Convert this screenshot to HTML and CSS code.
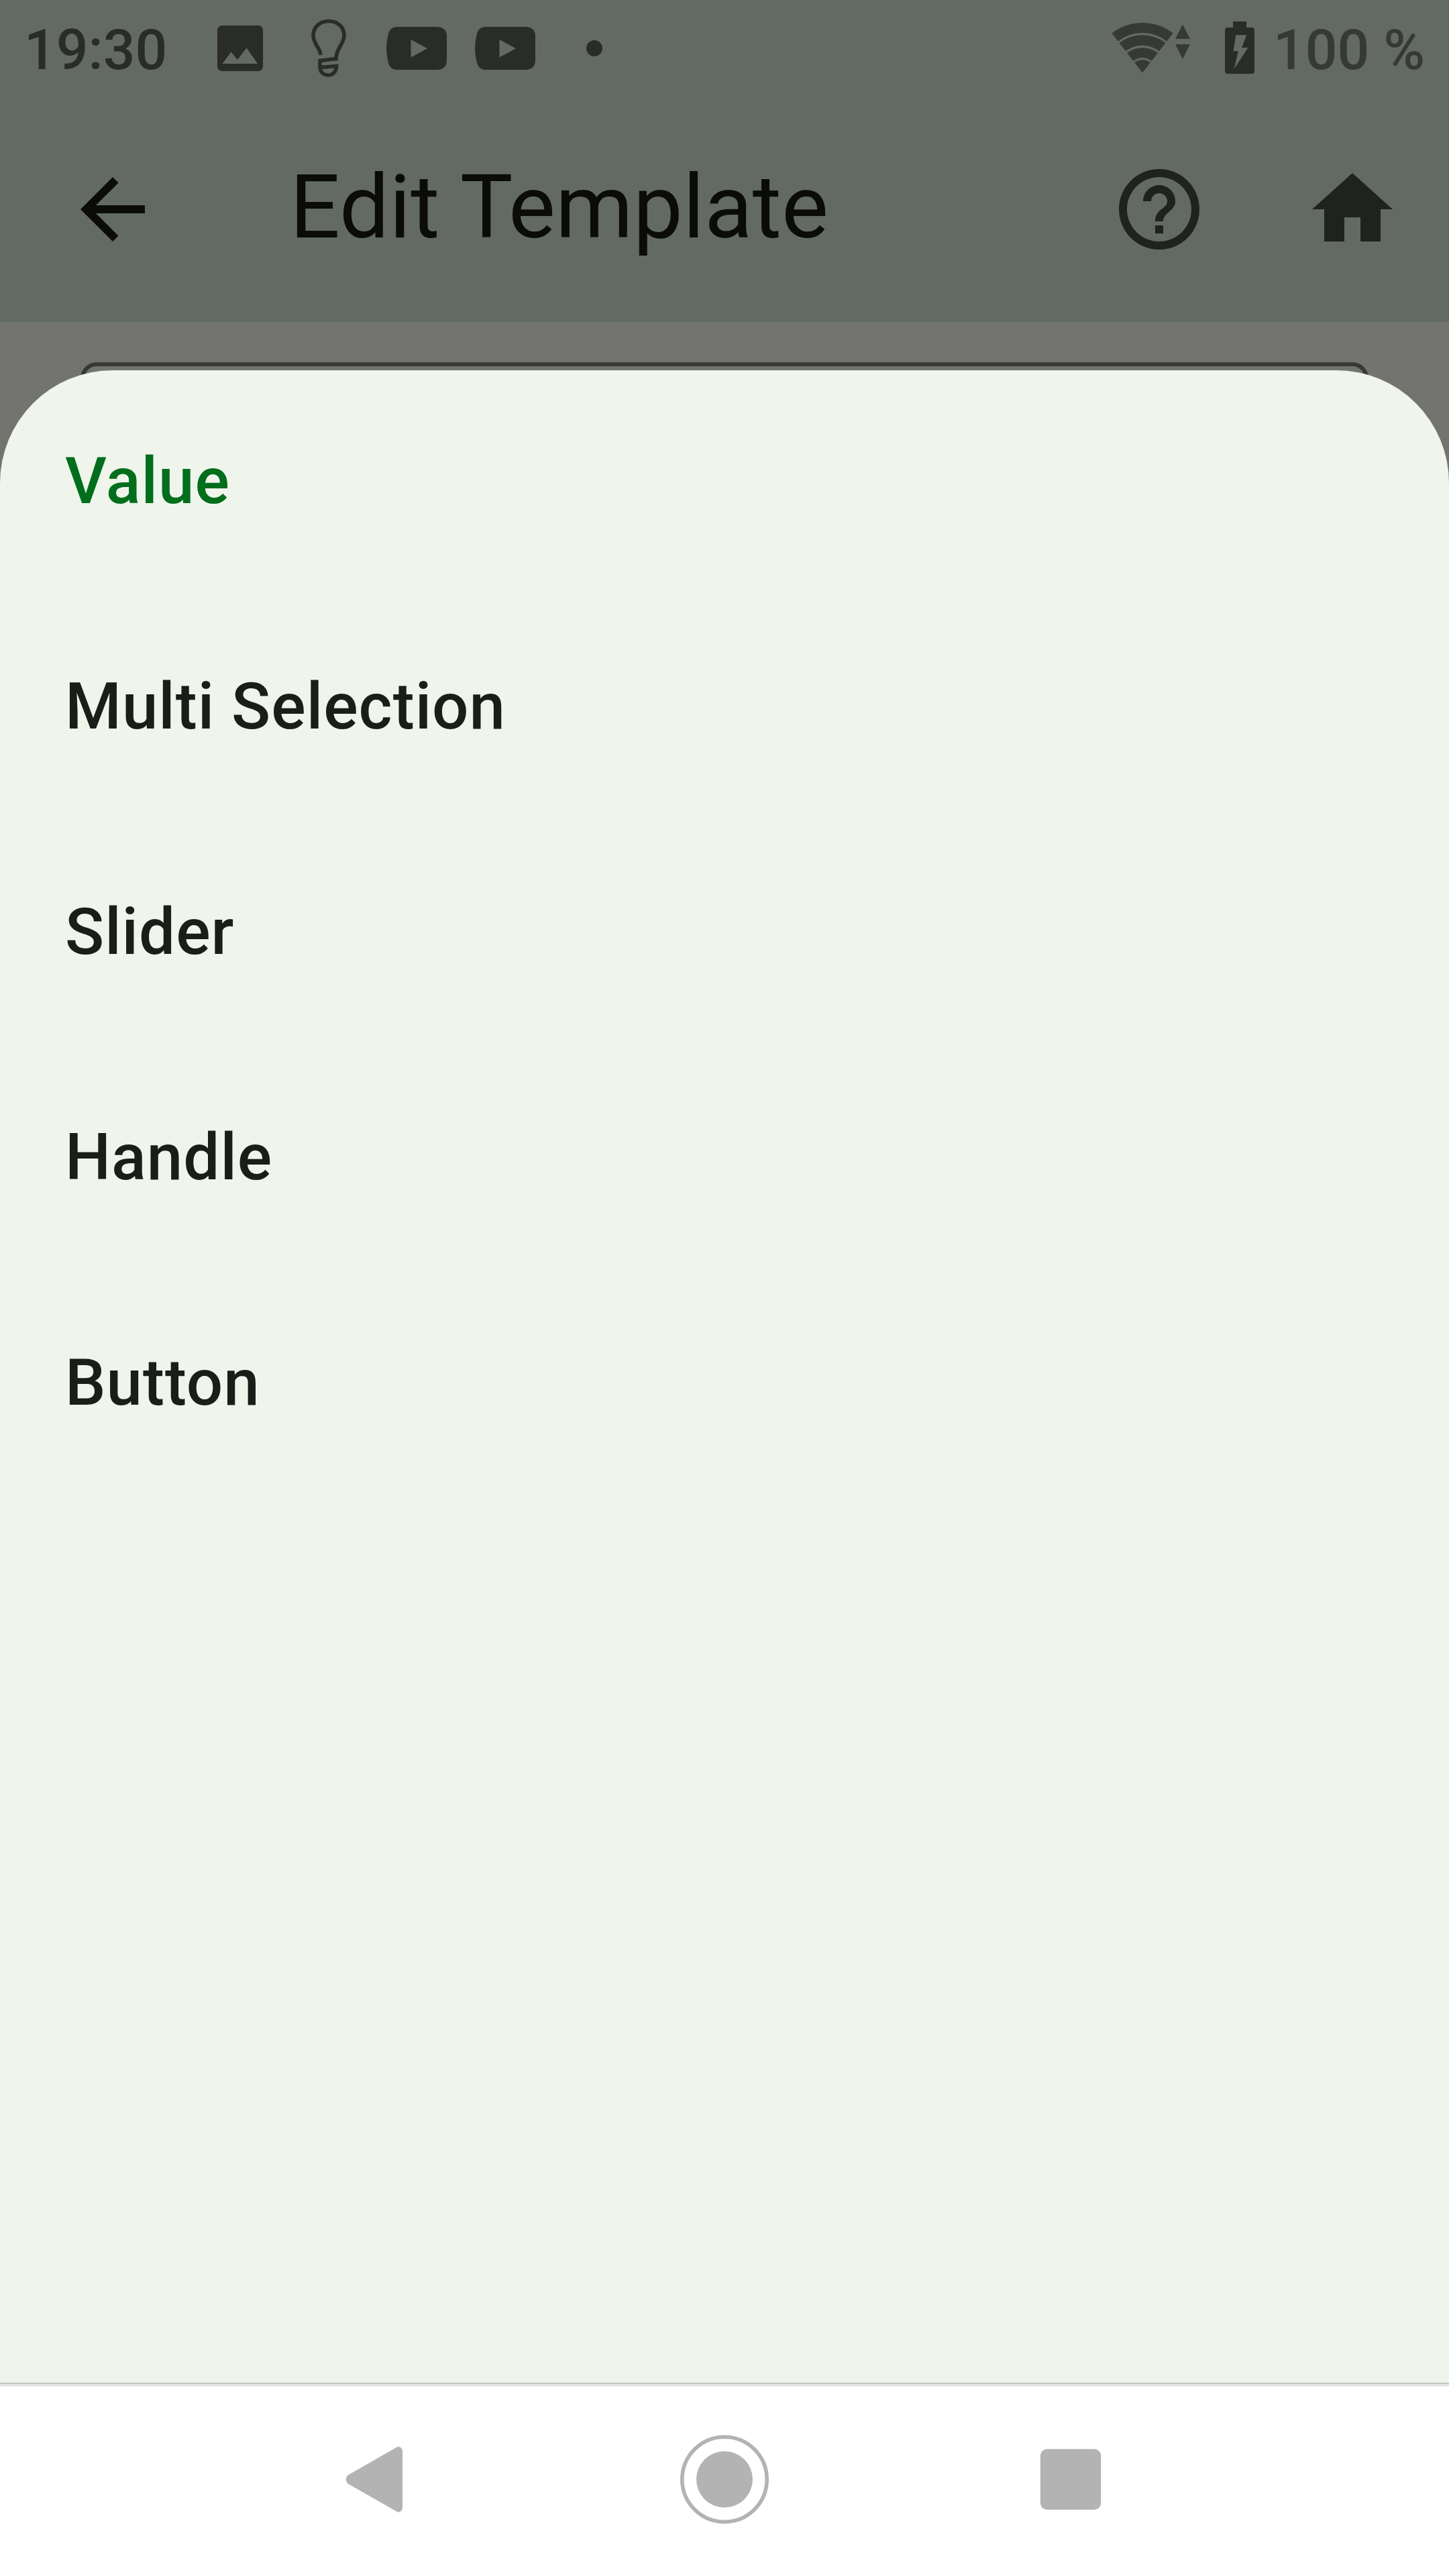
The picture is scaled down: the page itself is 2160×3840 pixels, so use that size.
FILE: index.html
```html
<!DOCTYPE html>
<html lang="en">
<head>
<meta charset="utf-8">
<title>Edit Template</title>
<link rel="stylesheet" href="styles.css">
</head>
<body>
<div class="screen">
  <header class="status-bar">
    <span class="clock">19:30</span>
    <div class="notifications">
      <svg class="icon-image" viewBox="0 0 68 68"><path fill-rule="evenodd" d="M7 0H61a7 7 0 0 1 7 7V61a7 7 0 0 1-7 7H7a7 7 0 0 1-7-7V7a7 7 0 0 1 7-7zM7.500 57H60L43.500 33.500 30 51 20.500 39.500z"/></svg>
      <svg class="icon-bulb" viewBox="0 0 52 88"><g fill="none" stroke="#2a2c29" stroke-width="5.600"><path d="M14 54C13 43 3 37 3 25C3 12 13 3.500 26 3.500S49 12 49 25C49 37 38 43 37 58L37 59.500L13 62.500V72C13 80 19 84 25.500 84C32 84 37.500 79 37.500 70.500L14 72.500"/></g></svg>
      <svg class="icon-video" viewBox="0 0 90 64"><path fill-rule="evenodd" d="M14 0H76Q90 1 90 14V50Q90 63 76 64H14Q5 63 2.500 52Q-2.500 32 2.500 12Q5 1 14 0zM36.500 19V45.500L61 32.300z"/></svg>
      <svg class="icon-video" viewBox="0 0 90 64"><path fill-rule="evenodd" d="M14 0H76Q90 1 90 14V50Q90 63 76 64H14Q5 63 2.500 52Q-2.500 32 2.500 12Q5 1 14 0zM36.500 19V45.500L61 32.300z"/></svg>
      <span class="more-dot"></span>
    </div>
    <div class="system">
      <svg class="icon-wifi" viewBox="1657 33 118 78">
        <g fill="none" stroke="#363936">
          <path stroke-width="15" d="M1662 55.500A67 67 0 0 1 1744 55.500"/>
          <path stroke-width="15.600" d="M1673.300 70.200A48.400 48.400 0 0 1 1732.700 70.200"/>
          <path stroke-width="14.800" d="M1684.700 84.900A29.900 29.900 0 0 1 1721.300 84.900"/>
        </g>
        <path fill="#363936" d="M1703 108.500L1691.300 93.300A19.300 19.300 0 0 1 1714.700 93.300zM1763 36.500L1774 58H1752zM1752 66H1774L1763 88z"/>
      </svg>
      <svg class="icon-battery" viewBox="1826 32 44 78"><path fill-rule="evenodd" d="M1838 32H1858V41H1866Q1870 41 1870 45V106Q1870 110 1866 110H1830Q1826 110 1826 106V45Q1826 41 1830 41H1838zM1842.300 52.300L1838.500 76.300H1845.800L1839.700 102.700L1860.400 71H1851L1858.300 52.300z"/></svg>
      <span class="level">100 %</span>
    </div>
  </header>
  <div class="app-bar">
    <svg class="icon back" viewBox="0 0 24 24"><path d="M20 11H7.830l5.590-5.590L12 4l-8 8 8 8 1.410-1.410L7.830 13H20z"/></svg>
    <h1 class="title">Edit Template</h1>
    <svg class="icon" viewBox="0 0 24 24"><path d="M11 18h2v-2h-2v2zm1-16C6.480 2 2 6.480 2 12s4.480 10 10 10 10-4.480 10-10S17.520 2 12 2zm0 18c-4.410 0-8-3.590-8-8s3.590-8 8-8 8 3.590 8 8-3.590 8-8 8zm0-14c-2.210 0-4 1.790-4 4h2c0-1.100.9-2 2-2s2 .9 2 2c0 2-3 1.750-3 5h2c0-2.250 3-2.500 3-5 0-2.210-1.790-4-4-4z"/></svg>
    <svg class="icon" viewBox="0 0 24 24"><path d="M10 20v-6h4v6h5v-8h3L12 3 2 12h3v8z"/></svg>
  </div>
  <main class="content">
    <div class="field"></div>
    <ul class="sheet">
      <li class="option selected">Value</li>
      <li class="option">Multi Selection</li>
      <li class="option">Slider</li>
      <li class="option">Handle</li>
      <li class="option">Button</li>
    </ul>
  </main>
  <nav class="nav-bar">
    <svg class="nav-icon" viewBox="0 0 144 144"><path d="M98.500 24.500Q105 20.500 108 29V115Q105 123.500 98.500 119.500L26 78Q21.500 72 26 66z"/></svg>
    <svg class="nav-icon" viewBox="0 0 144 144"><circle cx="72" cy="72" r="42"/><circle cx="72" cy="72" r="63.200" fill="none" stroke="#b3b3b3" stroke-width="5.600"/></svg>
    <svg class="nav-icon" viewBox="0 0 144 144"><rect x="26.800" y="26.800" width="90.400" height="90.400" rx="10"/></svg>
  </nav>
</div>
</body>
</html>
```
FILE: styles.css
```css
* {
  box-sizing: border-box;
}

body {
  margin: 0;
  font-family: Roboto, "Noto Sans", sans-serif;
}

svg {
  display: block;
  flex: none;
}

.screen {
  display: flex;
  flex-direction: column;
  width: 2160px;
  height: 3840px;
  overflow: hidden;
  background: #73746f;
}

.status-bar {
  display: flex;
  align-items: center;
  height: 144px;
  padding: 0 36px;
  background: #636a63;
  color: #2a2c29;
  fill: #2a2c29;
  font-size: 84px;
  font-weight: 500;
  line-height: 100px;
  white-space: nowrap;
}

.clock {
  width: 288px;
  padding-top: 6px;
}

.notifications {
  display: flex;
  align-items: center;
}

.icon-image {
  width: 68px;
  height: 68px;
}

.icon-bulb {
  width: 52px;
  height: 88px;
  margin-left: 72px;
}

.icon-video {
  width: 90px;
  height: 64px;
  margin-left: 60px;
}

.icon-video + .icon-video {
  margin-left: 42px;
}

.more-dot {
  width: 24px;
  height: 24px;
  margin-left: 76px;
  border-radius: 50%;
  background: #2a2c29;
}

.system {
  display: flex;
  align-items: center;
  margin-left: auto;
}

.icon-wifi {
  width: 118px;
  height: 78px;
}

.icon-battery {
  width: 44px;
  height: 78px;
  margin: 0 28px 2px 51px;
}

.level {
  padding-top: 6px;
  color: #363936;
}

.app-bar {
  display: flex;
  align-items: center;
  gap: 144px;
  height: 336px;
  padding: 0 72px 0 96px;
  background: #636a63;
  fill: #1f221f;
}

.icon {
  width: 144px;
  height: 144px;
}

.back {
  fill: #0b0c0a;
}

.title {
  flex: 1;
  margin: 0 0 6px 48px;
  color: #0b0c0a;
  font-size: 132px;
  font-weight: 400;
  line-height: 168px;
}

.content {
  position: relative;
  flex: 1;
  padding: 60px 120px 0;
}

.field {
  height: 336px;
  border: 6px solid #363936;
  border-radius: 24px;
}

/* Bottom sheet covering the dimmed form */
.sheet {
  position: absolute;
  inset: 72px 0 0;
  margin: 0;
  padding: 0;
  border-radius: 168px 168px 0 0;
  background: #eff5eb;
  list-style: none;
}

.option {
  height: 336px;
  padding: 0 97px;
  color: #1b1d19;
  font-size: 96px;
  font-weight: 500;
  letter-spacing: 1px;
  line-height: 330px;
}

.selected {
  color: #006e1c;
}

.nav-bar {
  display: flex;
  justify-content: center;
  align-items: center;
  gap: 372px;
  height: 288px;
  background: #fff;
  box-shadow: inset 0 1px #aaa, inset 0 5px #e0e0e0, inset 0 6px #f7f7f7;
  fill: #b3b3b3;
}

.nav-icon {
  width: 144px;
  height: 144px;
}
```
